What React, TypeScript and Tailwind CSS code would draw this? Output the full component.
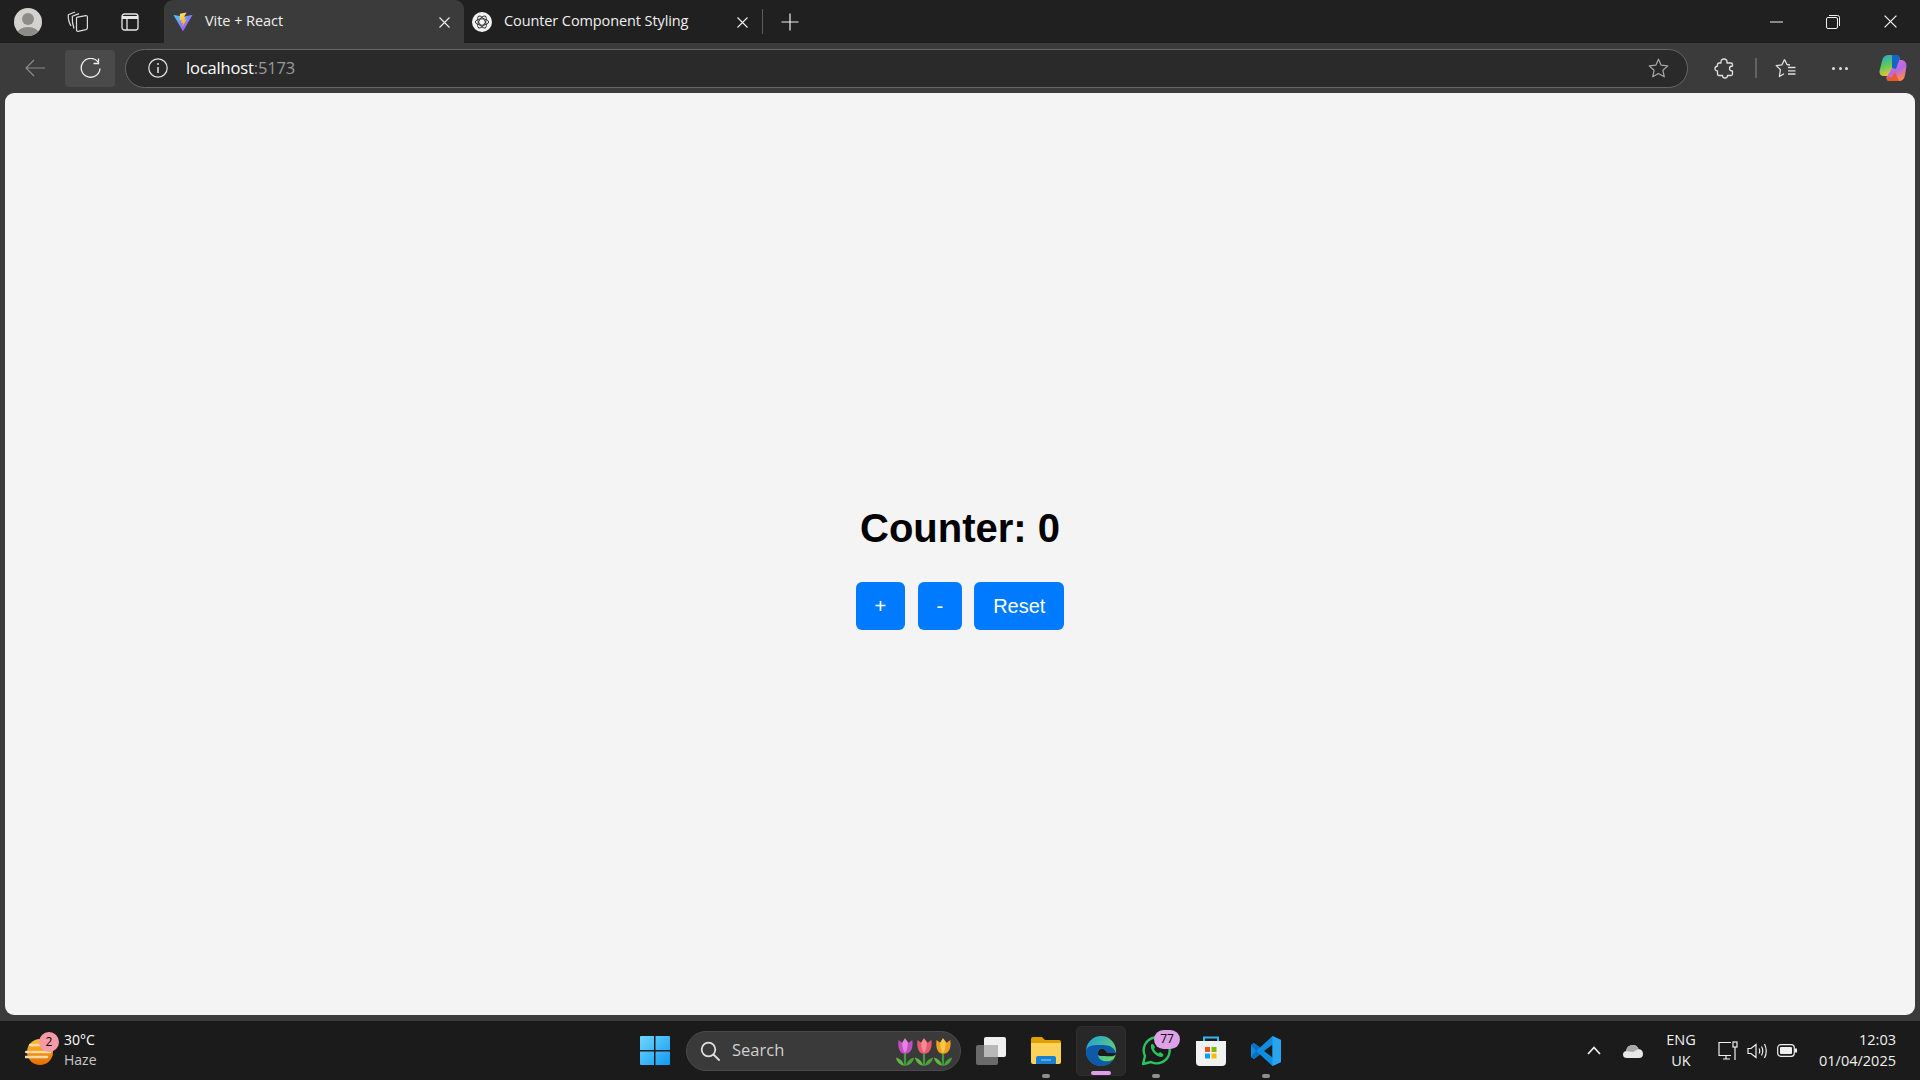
const font = "font-['Open_Sans','Noto_Sans',sans-serif]";

function ViteLogo() {
  return (
    <svg width="20" height="20" viewBox="0 0 20 20">
      <defs>
        <linearGradient id="vitePurple" x1="0" y1="0" x2="1" y2="1">
          <stop offset="0" stopColor="#41d1ff" />
          <stop offset="1" stopColor="#bd34fe" />
        </linearGradient>
        <linearGradient id="viteBolt" x1="0" y1="0" x2="0.3" y2="1">
          <stop offset="0" stopColor="#ffea83" />
          <stop offset="1" stopColor="#ffa800" />
        </linearGradient>
      </defs>
      <path d="M0.5 3 L10 4.6 L19.5 3 L10.2 19 Q10 19.4 9.8 19 Z" fill="url(#vitePurple)" />
      <path d="M13.6 0.5 L7 1.8 L6.6 8.6 L8.8 8.1 L8.2 11.2 L10 10.7 L9.2 15 L14 7.2 L11.6 7.7 L12.4 5 L10.8 5.3 Z" fill="url(#viteBolt)" />
    </svg>
  );
}

function ChatLogo() {
  return (
    <svg width="20" height="20" viewBox="0 0 20 20">
      <circle cx="10" cy="10" r="10" fill="#f4f4f4" />
      <g fill="none" stroke="#333" strokeWidth="1">
        <ellipse cx="10" cy="10" rx="6.6" ry="3.2" />
        <ellipse cx="10" cy="10" rx="6.6" ry="3.2" transform="rotate(60 10 10)" />
        <ellipse cx="10" cy="10" rx="6.6" ry="3.2" transform="rotate(120 10 10)" />
      </g>
    </svg>
  );
}

function CloseX({ size = 11 }: { size?: number }) {
  return (
    <svg width={size} height={size} viewBox="0 0 11 11" stroke="#f0f0f0" strokeWidth="1.1" fill="none">
      <path d="M0.5 0.5 L10.5 10.5 M10.5 0.5 L0.5 10.5" />
    </svg>
  );
}

function TabStrip() {
  return (
    <div className="flex h-[43px] items-stretch bg-[#202020]">
      <div className="flex w-[56px] items-center pl-[14px]">
        <svg width="28" height="28" viewBox="0 0 28 28">
          <defs>
            <clipPath id="profileClip">
              <circle cx="14" cy="14" r="14" />
            </clipPath>
          </defs>
          <circle cx="14" cy="14" r="14" fill="#d4d2cf" />
          <g clipPath="url(#profileClip)" fill="#8e8c89">
            <circle cx="14" cy="11" r="6" />
            <ellipse cx="14" cy="26" rx="11" ry="7" />
          </g>
        </svg>
      </div>
      <div className="flex w-[42px] items-center justify-center">
        <svg width="21" height="21" viewBox="0 0 21 21" fill="none" stroke="#dcdcdc" strokeWidth="1.2" strokeLinejoin="round">
          <path d="M10.5 6.2 L18.8 4.6 Q20.4 4.5 20.4 6 V16.8 Q20.4 18.2 19 18.6 L11 20.3 Q9.5 20.4 9.5 19 V7.5 Q9.5 6.4 10.5 6.2 Z" />
          <path d="M7 17.5 C5.6 13.5 5 9.5 5.3 5.2 L12 2.6" />
          <path d="M4 15 C1.6 11 1 8 1.3 3.8 L8 1" />
        </svg>
      </div>
      <div className="flex w-[66px] items-center justify-start pl-[23px]">
        <svg width="18" height="18" viewBox="0 0 18 18" fill="none" stroke="#e6e6e6" strokeWidth="1.3">
          <rect x="1" y="1" width="16" height="16" rx="2.5" />
          <path d="M1 4.5 H17" strokeWidth="3" />
          <path d="M6 5 V17" />
        </svg>
      </div>
      <div className={`flex w-[300px] items-center rounded-t-[9px] bg-[#3b3b3b] pl-[9px] ${font}`}>
        <ViteLogo />
        <span className="ml-[12px] pb-[1px] text-[14.5px] tracking-[-0.05px] text-[#f0f0f0]">Vite + React</span>
        <span className="ml-auto mr-[14px] mt-[1px] flex">
          <CloseX />
        </span>
      </div>
      <div className={`flex w-[298px] items-center pl-[8px] ${font}`}>
        <ChatLogo />
        <span className="ml-[12px] pb-[1px] text-[14.5px] tracking-[-0.1px] text-[#f0f0f0]">Counter Component Styling</span>
        <span className="ml-auto mr-[14px] mt-[1px] flex">
          <CloseX />
        </span>
      </div>
      <div className="my-[9px] w-px bg-[#5c5c5c]" />
      <div className="flex w-[54px] items-center justify-center">
        <svg width="18" height="18" viewBox="0 0 18 18" stroke="#f0f0f0" strokeWidth="1.2">
          <path d="M9 0.5 V17.5 M0.5 9 H17.5" />
        </svg>
      </div>
      <div className="ml-auto flex items-center pr-[23px]">
        <svg width="13" height="2" viewBox="0 0 13 2" stroke="#f0f0f0" strokeWidth="1">
          <path d="M0 1 H13" />
        </svg>
        <svg className="ml-[43px]" width="14" height="14" viewBox="0 0 14 14" fill="none" stroke="#f0f0f0" strokeWidth="1">
          <rect x="0.5" y="2.5" width="11" height="11" rx="1.5" />
          <path d="M3 0.5 H11.5 Q13.5 0.5 13.5 2.5 V11" />
        </svg>
        <span className="ml-[44px] flex">
          <CloseX size={13} />
        </span>
      </div>
    </div>
  );
}

function Toolbar() {
  return (
    <div className={`flex h-[50px] items-center bg-[#3b3b3b] ${font}`}>
      <div className="flex w-[65px] items-center justify-center pl-[5px]">
        <svg width="20" height="18" viewBox="0 0 20 18" fill="none" stroke="#8a8a8a" strokeWidth="1.2">
          <path d="M20 9 H1 M9 1 L1 9 L9 17" />
        </svg>
      </div>
      <div className="flex h-[37px] w-[50px] items-center justify-center rounded-[4px] bg-[#4a4a4a]">
        <svg width="21" height="21" viewBox="0 0 21 21" fill="none" stroke="#f0f0f0" strokeWidth="1.3">
          <path d="M18 4 A9.4 9.4 0 1 0 20 10.5" />
          <path d="M18.5 0.5 V5.5 H13.5" />
        </svg>
      </div>
      <div className="ml-[10px] flex h-[39px] w-[1563px] items-center rounded-full border border-[#666666] bg-[#2a2a2a] pl-[22px]">
        <svg width="20" height="20" viewBox="0 0 20 20" fill="none" stroke="#e8e8e8" strokeWidth="1.2">
          <circle cx="10" cy="10" r="9.2" />
          <path d="M10 9 V15" strokeWidth="1.5" />
          <circle cx="10" cy="6" r="0.9" fill="#e8e8e8" stroke="none" />
        </svg>
        <span className="ml-[18px] text-[16.5px] tracking-[-0.15px] text-white">
          localhost<span className="text-[#9a9a9a]">:5173</span>
        </span>
        <svg className="ml-auto mr-[18px]" width="21" height="20" viewBox="0 0 21 20" fill="none" stroke="#a8a8a8" strokeWidth="1.2">
          <path d="M10.5 1.2 L13.2 7.2 L19.8 7.9 L14.9 12.3 L16.3 18.8 L10.5 15.5 L4.7 18.8 L6.1 12.3 L1.2 7.9 L7.8 7.2 Z" strokeLinejoin="round" />
        </svg>
      </div>
      <div className="ml-[26px] flex items-center">
        <svg width="20" height="21" viewBox="0 0 20 21" fill="none" stroke="#e0e0e0" strokeWidth="1.3" strokeLinejoin="round">
          <path d="M7 4 Q7 1 10 1 Q13 1 13 4 L13 5 L17 5 Q18.5 5 18.5 6.5 L18.5 8 Q15.5 8 15.5 10.5 Q15.5 13 18.5 13 L18.5 16 Q18.5 17.5 17 17.5 L13.5 17.5 Q13.5 20 11 20 Q8.5 20 8.5 17.5 L5 17.5 Q3.5 17.5 3.5 16 L3.5 13 Q1 13 1 10.5 Q1 8.5 3.5 8 L3.5 6.5 Q3.5 5 5 5 L7 5 Z" />
        </svg>
        <div className="ml-[21px] h-[20px] w-[2px] bg-[#626262]" />
        <svg className="ml-[18px]" width="21" height="20" viewBox="0 0 21 20" fill="none" stroke="#e0e0e0" strokeWidth="1.3" strokeLinejoin="round">
          <path d="M9.5 1.5 L12 6.5 L15 7 M9.5 1.5 L7 6.8 L1.2 7.6 L5.4 11.6 L4.4 18.5 L9 15.8" />
          <path d="M13 9.5 H20.5 M13 12.8 H20.5 M13 16 H20.5" />
        </svg>
        <span className="ml-[36px] flex gap-[3.5px]">
          <span className="h-[3px] w-[3px] rounded-full bg-[#e0e0e0]" />
          <span className="h-[3px] w-[3px] rounded-full bg-[#e0e0e0]" />
          <span className="h-[3px] w-[3px] rounded-full bg-[#e0e0e0]" />
        </span>
        <svg className="ml-[31px]" width="28" height="28" viewBox="0 0 28 28">
          <defs>
            <linearGradient id="copA" x1="0" y1="0" x2="0.4" y2="1">
              <stop offset="0" stopColor="#1fa5e0" />
              <stop offset="0.55" stopColor="#5fc95a" />
              <stop offset="1" stopColor="#f5c13a" />
            </linearGradient>
            <linearGradient id="copB" x1="0" y1="0" x2="0.6" y2="1">
              <stop offset="0" stopColor="#e86fd0" />
              <stop offset="0.6" stopColor="#b56ae8" />
              <stop offset="1" stopColor="#ff8a4a" />
            </linearGradient>
          </defs>
          <path d="M9 1 H18 L21 4 L14 22 L5 22 Q0 22 0.5 17 L3 7 Q4.5 1 9 1 Z" fill="url(#copA)" />
          <path d="M18 6 H23 Q27.5 7 27.5 12 L26 21 Q25 27 20 27 H9 L7 24 Z" fill="url(#copB)" />
          <path d="M13 1 H18 Q20.5 1.5 21 4 L17 15 L13 14 Z" fill="#1664c8" />
          <path d="M9 27 L7 23 H13 L16 18 L20 27 Z" fill="#f0582e" />
        </svg>
      </div>
    </div>
  );
}

function Counter() {
  return (
    <div className="flex h-[922px] flex-col items-center justify-center rounded-[9px] bg-[#f4f4f4] pt-[26px] font-['Liberation_Sans',sans-serif]">
      <h1 className="text-[40px] font-bold leading-[46px] text-black">Counter: 0</h1>
      <div className="mt-[31px] flex gap-[12.5px]">
        <button className="h-[48px] rounded-[6px] bg-[#007bff] px-[18.8px] text-[20px] text-white">+</button>
        <button className="h-[48px] rounded-[6px] bg-[#007bff] px-[18.8px] text-[20px] text-white">-</button>
        <button className="h-[48px] rounded-[6px] bg-[#007bff] px-[18.8px] text-[20px] text-white">Reset</button>
      </div>
    </div>
  );
}

function Tulip({ color, light, className = "" }: { color: string; light: string; className?: string }) {
  return (
    <svg className={className} width="22" height="30" viewBox="0 0 24 32">
      <path d="M12 17 V31" stroke="#3f9a3a" strokeWidth="2.4" />
      <path d="M11 31 C10 26 6 23 2 22 C3 27 6 30 11 31 Z" fill="#62b544" />
      <path d="M13 31 C14 26 18 23 22 22 C21 27 18 30 13 31 Z" fill="#4aa53c" />
      <path d="M5 3 L9 6 L12 1 L16 6 L20 3 C21 9 20 18 12 18 C5 18 4 9 5 3 Z" fill={color} />
      <path d="M9 6 L12 1 L15 6 C15 11 14 15 12 17 C10 15 9 11 9 6 Z" fill={light} />
    </svg>
  );
}

function Taskbar() {
  return (
    <div className={`flex h-[59px] items-center bg-[#1b1b1b] ${font}`}>
      {/* weather */}
      <div className="flex w-[640px] items-center pl-[25px]">
        <div className="relative h-[32px] w-[30px]">
          <svg className="absolute left-0 top-[3px]" width="30" height="29" viewBox="0 0 30 29">
            <defs>
              <linearGradient id="sun" x1="0" y1="0" x2="0" y2="1">
                <stop offset="0" stopColor="#fbc02d" />
                <stop offset="1" stopColor="#e86c00" />
              </linearGradient>
            </defs>
            <circle cx="15" cy="14" r="13" fill="url(#sun)" />
            <path d="M5 7 H27 M1 14 H25 M0 19 H22" stroke="#f2d9a8" strokeWidth="2.4" strokeLinecap="round" />
          </svg>
          <span className="absolute left-[14px] top-[-3px] flex h-[20px] w-[20px] items-center justify-center rounded-full bg-[#f79aa8] text-[12px] text-black">
            2
          </span>
        </div>
        <div className="ml-[9px] -mt-[2px] flex flex-col leading-[20px]">
          <span className="text-[14px] text-white">30°C</span>
          <span className="text-[14px] text-[#c8c8c8]">Haze</span>
        </div>
      </div>

      {/* start and search */}
      <svg width="30" height="29" viewBox="0 0 30 29">
        <defs>
          <linearGradient id="winLogo" x1="0" y1="0" x2="1" y2="1">
            <stop offset="0" stopColor="#6fd6fb" />
            <stop offset="1" stopColor="#0f9bf5" />
          </linearGradient>
        </defs>
        <path d="M1 0 H14 V14 H0 V1 Q0 0 1 0 Z M15.5 0 H29 Q30 0 30 1 V14 H15.5 Z M0 15.5 H14 V29 H1 Q0 29 0 28 Z M15.5 15.5 H30 V28 Q30 29 29 29 H15.5 Z" fill="url(#winLogo)" />
      </svg>
      <div className="ml-[16px] flex h-[40px] w-[275px] items-center rounded-full border border-[#4a4a4a] bg-[#3a3a3a] pl-[13px]">
        <svg width="20" height="20" viewBox="0 0 20 20" fill="none" stroke="#e0e0e0" strokeWidth="1.8">
          <circle cx="8.5" cy="8.5" r="6.8" />
          <path d="M13.5 13.5 L19 19" strokeLinecap="round" />
        </svg>
        <span className="ml-[12px] text-[16.5px] text-[#d0d0d0]">Search</span>
        <div className="ml-auto mr-[6px] mt-[3px] flex">
          <Tulip color="#c04fc0" light="#e584e0" />
          <Tulip color="#ea5a6e" light="#f58a90" className="-ml-[3px]" />
          <Tulip color="#f0a020" light="#f8c848" className="-ml-[3px]" />
        </div>
      </div>

      {/* pinned apps */}
      <div className="ml-[15px] flex h-[50px] items-center">
        <div className="flex w-[30px] justify-center">
          <svg width="30" height="28" viewBox="0 0 30 28">
            <rect x="0" y="8" width="22" height="20" rx="2" fill="#6a6a6a" />
            <rect x="8" y="0" width="22" height="20" rx="2" fill="#f0f0f0" />
            <rect x="8" y="8" width="14" height="12" fill="#b8b8b8" />
          </svg>
        </div>
        <div className="relative ml-[25px] flex h-[50px] w-[30px] items-center justify-center">
          <svg width="30" height="27" viewBox="0 0 30 27">
            <path d="M0 2 Q0 0 2 0 H11 L14 3 H28 Q30 3 30 5 V8 H0 Z" fill="#e0a000" />
            <path d="M0 6 H30 V25 Q30 27 28 27 H2 Q0 27 0 25 Z" fill="#fbd25a" />
            <path d="M5 21 Q5 19 7 19 H23 Q25 19 25 21 V27 H5 Z" fill="#1a7fd0" />
            <path d="M10 23 H20" stroke="#7cc4f0" strokeWidth="1.2" />
          </svg>
          <span className="absolute bottom-[-2px] h-[4px] w-[8px] rounded-full bg-[#8e8e8e]" />
        </div>
        <div className="relative ml-[15px] flex h-[50px] w-[50px] items-center justify-center rounded-[5px] border border-[#2e2e2e] bg-[#282828]">
          <svg width="30" height="30" viewBox="0 0 30 30">
            <defs>
              <linearGradient id="edgeTop" x1="0" y1="0" x2="1" y2="0.8">
                <stop offset="0" stopColor="#1b9de2" />
                <stop offset="1" stopColor="#72d95c" />
              </linearGradient>
            </defs>
            <circle cx="15" cy="15" r="15" fill="url(#edgeTop)" />
            <path d="M0 15 C0 24 7 30 15 30 C20 30 25 28 28 23 C22 27 13 26 12 19 C11 14 16 11 19 14 C21 16 18 19 20 19 L30 19 C30 12 24 9 17 9 C8 9 1 9 0 15 Z" fill="#0f5aa8" />
            <path d="M12 19 C11 14 16 11 19 14 L21 17 H30 V16 C30 22 22 20 18 20 C15 20 13 20 12 19 Z" fill="#1b1b1b" />
          </svg>
          <span className="absolute bottom-0 h-[4px] w-[20px] rounded-full bg-[#dea0e6]" />
        </div>
        <div className="relative ml-[15px] flex h-[50px] w-[30px] items-center justify-center">
          <svg width="30" height="30" viewBox="0 0 30 30" fill="none">
            <path d="M2 28 L4 20 A13 13 0 1 1 10 26 Z" stroke="#25c45f" strokeWidth="2.4" strokeLinejoin="round" />
            <path d="M10 9 C9 14 14 20 20 21 C22 21 23 19 22 18 L19 16 L17.5 17.5 C15.5 16.5 13.5 14.5 13 13 L14 11 L12 8 C11 8 10.5 8 10 9 Z" fill="#25c45f" />
          </svg>
          <span className="absolute right-[-9px] top-[4px] flex h-[19px] w-[26px] items-center justify-center rounded-full bg-[#dea0e6] text-[12px] text-black">
            77
          </span>
          <span className="absolute bottom-[-2px] h-[4px] w-[8px] rounded-full bg-[#8e8e8e]" />
        </div>
        <div className="ml-[25px] flex h-[50px] w-[30px] items-center justify-center">
          <svg width="30" height="30" viewBox="0 0 30 30">
            <path d="M8 5 V1.5 H22 V5" fill="none" stroke="#30b8f0" strokeWidth="2" />
            <path d="M0 5 H30 V26 Q30 30 26 30 H4 Q0 30 0 26 Z" fill="#f2f2f2" />
            <rect x="9" y="11" width="5" height="5" fill="#f25022" />
            <rect x="15.5" y="11" width="5" height="5" fill="#7fba00" />
            <rect x="9" y="17.5" width="5" height="5" fill="#00a4ef" />
            <rect x="15.5" y="17.5" width="5" height="5" fill="#ffb900" />
          </svg>
        </div>
        <div className="relative ml-[25px] flex h-[50px] w-[30px] items-center justify-center">
          <svg width="30" height="30" viewBox="0 0 30 30">
            <path d="M21.5 0 L30 4 V26 L21.5 30 L9 18.5 L3 23 L0 21 V9 L3 7 L9 11.5 Z M21.5 8.5 L13 15 L21.5 21.5 Z" fill="#0f8de0" fillRule="evenodd" />
            <path d="M21.5 0 L30 4 V26 L21.5 30 Z" fill="#27a5ee" />
            <path d="M0 9 L3 7 L9 11.5 L5 15 Z M0 21 L3 23 L9 18.5 L5 15 Z" fill="#0a6fc0" />
          </svg>
          <span className="absolute bottom-[-2px] h-[4px] w-[8px] rounded-full bg-[#8e8e8e]" />
        </div>
      </div>

      {/* tray */}
      <div className="ml-auto flex items-center pr-[24px]">
        <svg width="14" height="9" viewBox="0 0 14 9" fill="none" stroke="#f0f0f0" strokeWidth="1.7">
          <path d="M1 8 L7 1.5 L13 8" />
        </svg>
        <svg className="ml-[22px]" width="20" height="14" viewBox="0 0 20 14">
          <path d="M4 14 Q0 14 0 10.5 Q0 7.5 3 7 Q4 1 10 1 Q14 1 15.5 5 Q20 5.5 20 10 Q20 14 16 14 Z" fill="#e8e8e8" />
          <path d="M3 7 Q4 1 10 1 Q14 1 15.5 5 L10 8 Z" fill="#a8a8a8" />
        </svg>
        <div className="ml-[20px] -mt-[2px] flex w-[36px] flex-col items-center text-[14.5px] leading-[21px] text-[#f0f0f0]">
          <span>ENG</span>
          <span>UK</span>
        </div>
        <svg className="ml-[19px]" width="20" height="20" viewBox="0 0 20 20" fill="none" stroke="#f0f0f0" strokeWidth="1.2">
          <path d="M13 14.5 H1 V1.5 H13" />
          <path d="M5 18 H12 M8 15 V18" />
          <rect x="15" y="1" width="4" height="5" />
          <path d="M17 6 V19" />
        </svg>
        <svg className="ml-[9px]" width="21" height="16" viewBox="0 0 21 16" fill="none" stroke="#f0f0f0" strokeWidth="1.2">
          <path d="M1 5.5 H4 L9 1.5 V14.5 L4 10.5 H1 Z" />
          <path d="M12 5.5 Q13.5 8 12 10.5 M14.5 3.5 Q17 8 14.5 12.5 M17.5 1 Q21 8 17.5 15" />
        </svg>
        <svg className="ml-[9px]" width="20" height="13" viewBox="0 0 20 13" fill="none">
          <rect x="0.7" y="0.7" width="16.6" height="11.6" rx="3" stroke="#f0f0f0" strokeWidth="1.2" />
          <rect x="3" y="3" width="12" height="7" rx="1" fill="#f0f0f0" />
          <rect x="18" y="4.5" width="2" height="4" fill="#f0f0f0" />
        </svg>
        <div className="ml-[22px] -mt-[2px] flex flex-col items-end text-[14.5px] leading-[21px] text-[#f0f0f0]">
          <span>12:03</span>
          <span>01/04/2025</span>
        </div>
      </div>
    </div>
  );
}

export default function App() {
  return (
    <div className="flex h-[1080px] w-[1920px] flex-col overflow-hidden bg-[#3b3b3b]">
      <TabStrip />
      <Toolbar />
      <div className="px-[5px]">
        <Counter />
      </div>
      <div className="mt-[6px]">
        <Taskbar />
      </div>
    </div>
  );
}
